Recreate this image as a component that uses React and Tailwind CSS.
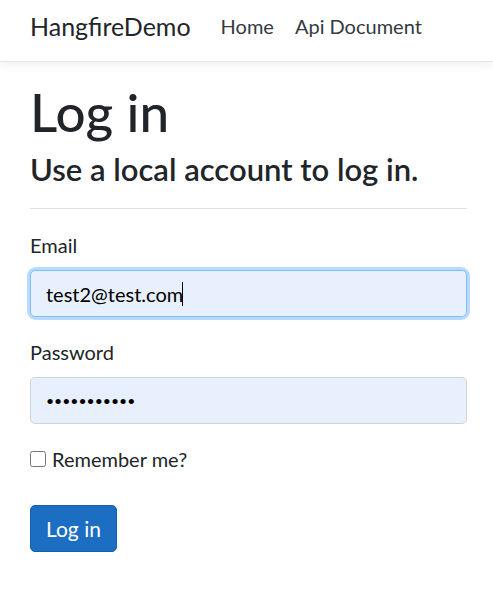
export default function App() {
  return (
    <div className="min-h-[594px] bg-white font-['Lato',sans-serif] text-[20px] text-[#212529]">
      <header className="mb-5 h-[62px] border-b border-[#e5e5e5] bg-white shadow-[0_4px_8px_rgba(0,0,0,0.05)]">
        <nav className="flex h-[61px] items-center px-[30px] pb-[9px]">
          <a href="#" className="mr-[30px] text-[25px] leading-none text-[#212529]">HangfireDemo</a>
          <ul className="flex items-center gap-[21px] text-[20px] text-[#343a40]">
            <li><a href="#">Home</a></li>
            <li><a href="#">Api Document</a></li>
          </ul>
        </nav>
      </header>

      <main className="pl-[30px] pr-[26px]">
        <h1 className="mb-[10px] text-[53px] font-medium leading-[59px]">Log in</h1>
        <section>
          <form onSubmit={(e) => e.preventDefault()}>
            <h4 className="text-[31px] font-semibold leading-[1.2]">Use a local account to log in.</h4>
            <hr className="mt-5 mb-[21px] border-t border-[#e0e0e0]" />

            <div className="mb-5">
              <label htmlFor="email" className="mb-[10px] block leading-[30px]">Email</label>
              <div className="relative rounded-[6px] shadow-[0_0_0_3px_rgba(0,123,255,0.28)]">
                <input
                  id="email"
                  type="email"
                  defaultValue="test2@test.com"
                  className="block h-[47px] w-full rounded-[5px] border border-[#80bdff] bg-[#e8f0fe] px-[15px] text-[20px] text-black outline-none"
                />
                <span className="pointer-events-none absolute left-[152px] top-[12px] h-[24px] w-px bg-black" />
              </div>
            </div>

            <div className="mb-5">
              <label htmlFor="password" className="mb-[10px] block leading-[30px]">Password</label>
              <input
                id="password"
                type="password"
                defaultValue="passwordabc"
                className="block h-[47px] w-full rounded-[5px] border border-[#ced4da] bg-[#e8f0fe] px-[15px] text-[14px] text-black outline-none"
              />
            </div>

            <div className="mb-[31px]">
              <label className="flex items-center gap-[6px] leading-[30px]">
                <input type="checkbox" className="h-[16px] w-[16px] accent-[#767676]" />
                Remember me?
              </label>
            </div>

            <button
              type="submit"
              className="h-[47px] rounded-[5px] border border-[#1861ac] bg-[#1b6ec2] px-[15px] text-[21px] text-white"
            >
              Log in
            </button>
          </form>
        </section>
      </main>
    </div>
  )
}
